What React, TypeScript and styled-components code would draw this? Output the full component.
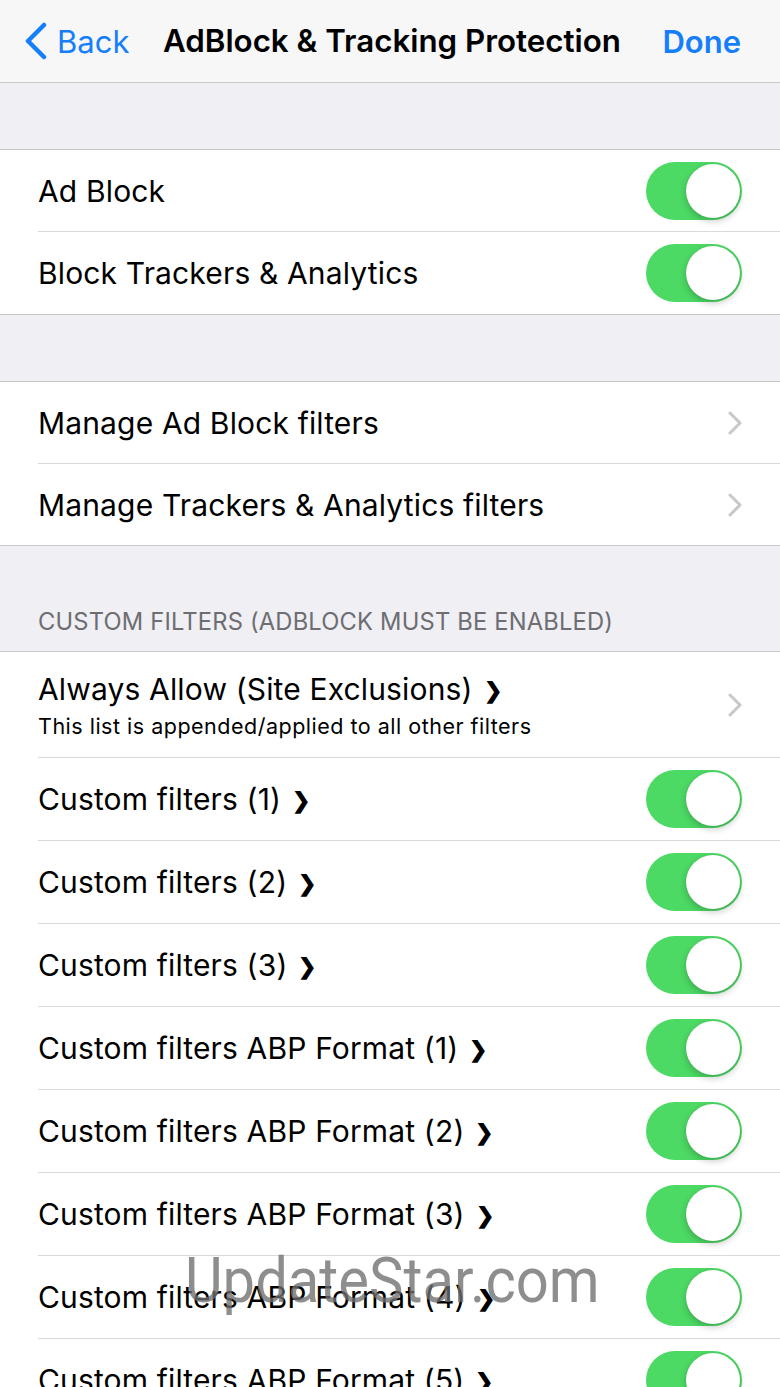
import React from 'react';
import styled, { createGlobalStyle } from 'styled-components';

const GlobalStyle = createGlobalStyle`
  html, body {
    margin: 0;
    padding: 0;
    background: #efeff4;
    font-family: Inter, "Noto Sans", sans-serif;
    overflow: hidden;
  }
`;

const Screen = styled.div`
  position: relative;
  width: 780px;
  height: 1387px;
  overflow: hidden;
  background: #efeff4;
`;

const NavBar = styled.div`
  display: flex;
  align-items: center;
  height: 83px;
  padding: 0 39px 0 24px;
  background: #f7f7f8;
  border-bottom: 1px solid #c8c7cc;
  box-sizing: border-box;
`;

const BackButton = styled.div`
  display: flex;
  align-items: center;
  gap: 9px;
  color: #157efb;
  font-size: 31px;
`;

const NavTitle = styled.div`
  flex: 1;
  text-align: center;
  font-size: 31.3px;
  font-weight: 600;
  color: #000;
  padding-right: 8px;
`;

const DoneButton = styled.div`
  color: #157efb;
  font-size: 31px;
  font-weight: 600;
`;

const Spacer = styled.div<{ $h: number }>`
  height: ${({ $h }) => $h}px;
`;

const SectionHeader = styled.div`
  height: 105px;
  box-sizing: border-box;
  padding: 0 38px 15px;
  display: flex;
  align-items: flex-end;
  color: #6d6d72;
  font-size: 23.7px;
  letter-spacing: 0.2px;
`;

const Group = styled.div`
  background: #fff;
  border-top: 1px solid #c8c7cc;
  border-bottom: 1px solid #c8c7cc;
`;

const Row = styled.div<{ $h: number; $last?: boolean }>`
  display: flex;
  align-items: center;
  margin-left: 38px;
  padding-right: 38px;
  height: ${({ $h }) => $h}px;
  border-bottom: ${({ $last }) => ($last ? 'none' : '1px solid #d9d9dd')};
`;

const RowText = styled.div`
  flex: 1;
  display: flex;
  flex-direction: column;
  gap: 6px;
`;

const Label = styled.div`
  font-size: 30px;
  color: #000;
  letter-spacing: 0.15px;
`;

const SubLabel = styled.div`
  font-size: 21.5px;
  color: #000;
  letter-spacing: 0.5px;
`;

const InlineArrow = styled.span`
  font-size: 22px;
  font-weight: 700;
  margin-left: 11px;
  position: relative;
  top: -2px;
`;

const Track = styled.div`
  width: 96px;
  height: 58px;
  border-radius: 29px;
  background: #4cd964;
  display: flex;
  align-items: center;
  justify-content: flex-end;
  padding: 2px;
  box-sizing: border-box;
`;

const Knob = styled.div`
  width: 54px;
  height: 54px;
  border-radius: 50%;
  background: #fff;
  box-shadow: 0 3px 7px rgba(0, 0, 0, 0.22), 0 0 1px rgba(0, 0, 0, 0.15);
`;

const Watermark = styled.div`
  position: absolute;
  left: 185px;
  top: 1244px;
  font-size: 63px;
  color: rgba(110, 110, 110, 0.78);
  font-family: Roboto, sans-serif;
  transform: scaleX(0.92);
  transform-origin: left center;
  pointer-events: none;
`;

const Toggle = () => (
  <Track>
    <Knob />
  </Track>
);

const Disclosure = () => (
  <svg width="14" height="24" viewBox="0 0 14 24">
    <path d="M2 2 L12 12 L2 22" fill="none" stroke="#c7c7cc" strokeWidth="3" strokeLinecap="round" strokeLinejoin="round" />
  </svg>
);

const BackChevron = () => (
  <svg width="24" height="38" viewBox="0 0 24 38">
    <path d="M20 3 L4 19 L20 35" fill="none" stroke="#157efb" strokeWidth="4.5" strokeLinecap="round" strokeLinejoin="round" />
  </svg>
);

const customRows = [
  'Custom filters (1)',
  'Custom filters (2)',
  'Custom filters (3)',
  'Custom filters ABP Format (1)',
  'Custom filters ABP Format (2)',
  'Custom filters ABP Format (3)',
  'Custom filters ABP Format (4)',
  'Custom filters ABP Format (5)',
];

export default function App() {
  return (
    <Screen>
      <GlobalStyle />
      <NavBar>
        <BackButton>
          <BackChevron />
          Back
        </BackButton>
        <NavTitle>AdBlock &amp; Tracking Protection</NavTitle>
        <DoneButton>Done</DoneButton>
      </NavBar>
      <Spacer $h={66} />
      <Group>
        <Row $h={81}>
          <RowText><Label>Ad Block</Label></RowText>
          <Toggle />
        </Row>
        <Row $h={82} $last>
          <RowText><Label>Block Trackers &amp; Analytics</Label></RowText>
          <Toggle />
        </Row>
      </Group>
      <Spacer $h={66} />
      <Group>
        <Row $h={81}>
          <RowText><Label>Manage Ad Block filters</Label></RowText>
          <Disclosure />
        </Row>
        <Row $h={81} $last>
          <RowText><Label>Manage Trackers &amp; Analytics filters</Label></RowText>
          <Disclosure />
        </Row>
      </Group>
      <SectionHeader>CUSTOM FILTERS (ADBLOCK MUST BE ENABLED)</SectionHeader>
      <Group>
        <Row $h={105}>
          <RowText>
            <Label>
              Always Allow (Site Exclusions)<InlineArrow>❯</InlineArrow>
            </Label>
            <SubLabel>This list is appended/applied to all other filters</SubLabel>
          </RowText>
          <Disclosure />
        </Row>
        {customRows.map((name, i) => (
          <Row key={name} $h={82} $last={i === customRows.length - 1}>
            <RowText>
              <Label>
                {name}<InlineArrow>❯</InlineArrow>
              </Label>
            </RowText>
            <Toggle />
          </Row>
        ))}
      </Group>
      <Watermark>UpdateStar.com</Watermark>
    </Screen>
  );
}
